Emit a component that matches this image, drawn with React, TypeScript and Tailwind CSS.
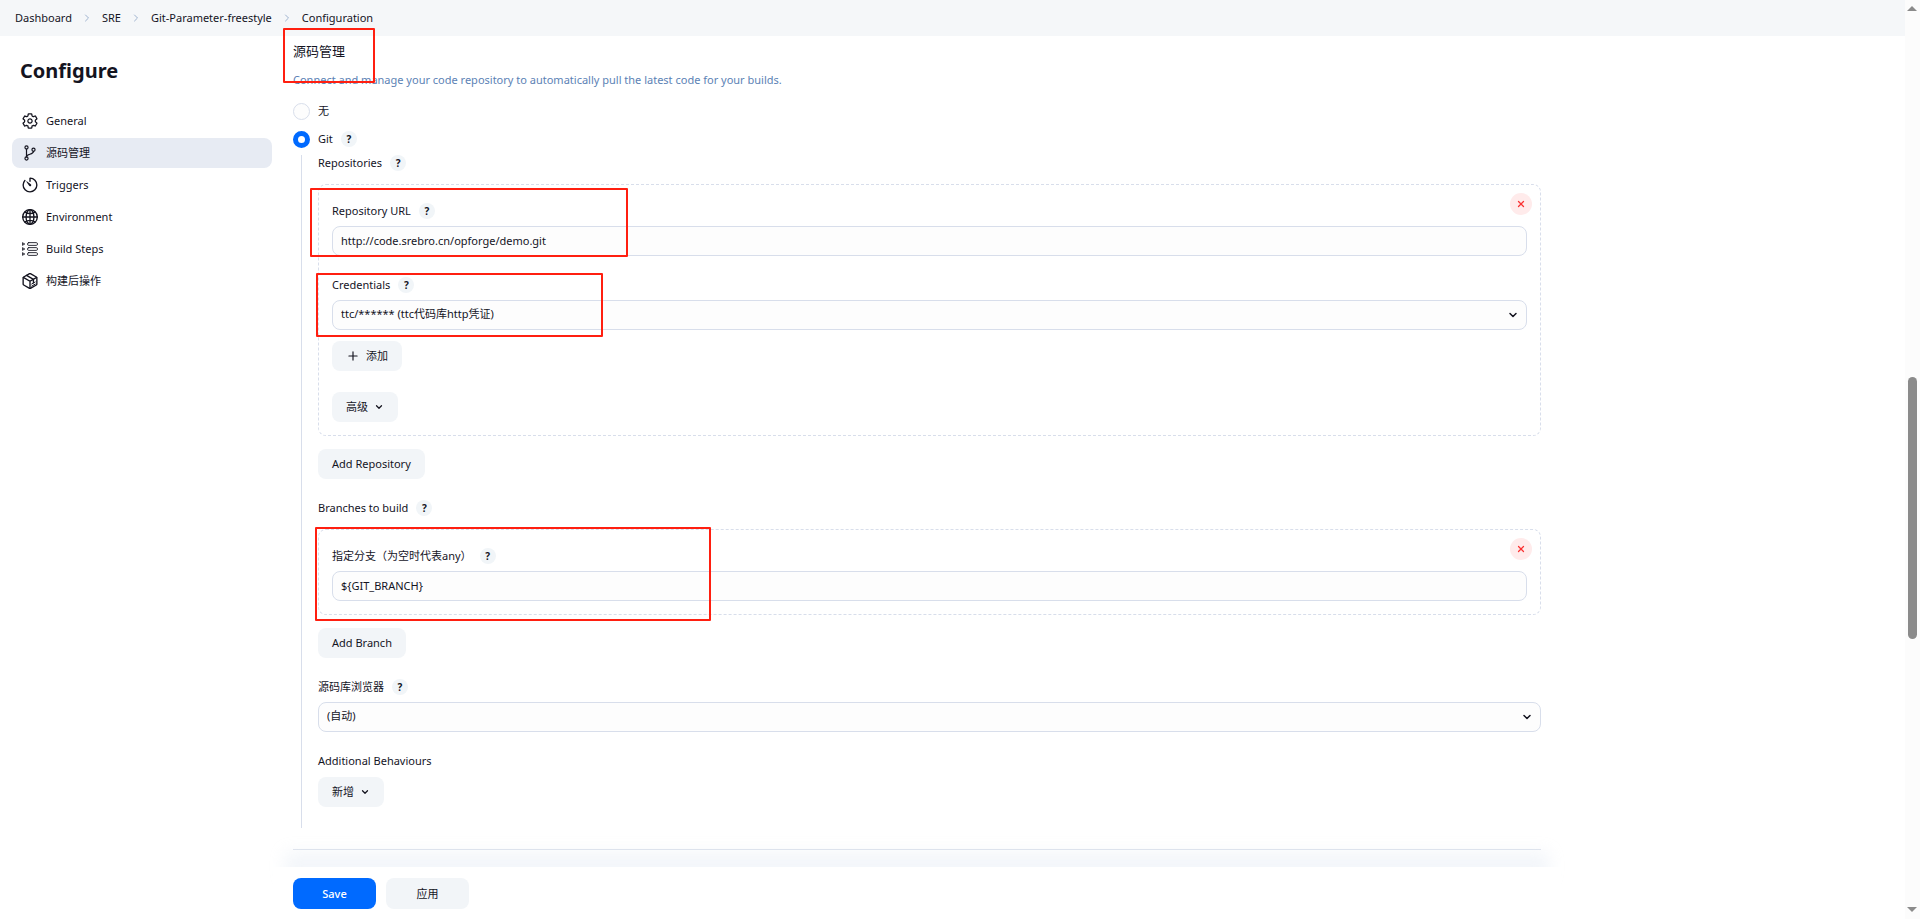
import React, { useId, useState } from 'react';
import { ChevronDown, ChevronRight, Plus, X } from 'lucide-react';

const iconProps = {
  width: 16,
  height: 16,
  viewBox: '0 0 512 512',
  fill: 'none',
  stroke: 'currentColor',
  strokeWidth: 38,
  strokeLinecap: 'round' as const,
  strokeLinejoin: 'round' as const,
};

const GearIcon = () => (
  <svg {...iconProps} viewBox="16 16 480 480">
    <path d="M262.29 192.31a64 64 0 1057.4 57.4 64.13 64.13 0 00-57.4-57.4zM416.39 256a154.34 154.34 0 01-1.53 20.79l45.21 35.46a10.81 10.81 0 012.45 13.75l-42.77 74a10.81 10.81 0 01-13.14 4.59l-44.9-18.08a16.11 16.11 0 00-15.17 1.75A164.48 164.48 0 01325 400.8a15.94 15.94 0 00-8.82 12.14l-6.73 47.89a11.08 11.08 0 01-10.68 9.17h-85.54a11.11 11.11 0 01-10.69-8.87l-6.72-47.82a16.07 16.07 0 00-9-12.22 155.3 155.3 0 01-21.46-12.57 16 16 0 00-15.11-1.71l-44.89 18.07a10.81 10.81 0 01-13.14-4.58l-42.77-74a10.8 10.8 0 012.45-13.75l38.21-30a16.05 16.05 0 006-14.08c-.36-4.17-.58-8.33-.58-12.5s.21-8.27.58-12.35a16 16 0 00-6.07-13.94l-38.19-30A10.81 10.81 0 0149.48 186l42.77-74a10.81 10.81 0 0113.14-4.59l44.9 18.08a16.11 16.11 0 0015.17-1.75A164.48 164.48 0 01187 111.2a15.94 15.94 0 008.82-12.14l6.73-47.89A11.08 11.08 0 01213.23 42h85.54a11.11 11.11 0 0110.69 8.87l6.72 47.82a16.07 16.07 0 009 12.22 155.3 155.3 0 0121.46 12.57 16 16 0 0015.11 1.71l44.89-18.07a10.81 10.81 0 0113.14 4.58l42.77 74a10.8 10.8 0 01-2.45 13.75l-38.21 30a16.05 16.05 0 00-6.05 14.08c.33 4.14.55 8.3.55 12.47z" />
  </svg>
);

const BranchIcon = () => (
  <svg {...iconProps}>
    <circle cx="144" cy="80" r="50" />
    <circle cx="144" cy="432" r="50" />
    <circle cx="368" cy="152" r="50" />
    <path d="M144 382V130M368 202c0 128-224 60-224 180" />
  </svg>
);

const TimerIcon = () => (
  <svg {...iconProps} viewBox="32 32 448 448">
    <path d="M112.91 128A191.85 191.85 0 0064 254c-1.18 106.35 85.65 193.8 192 194 106.2.2 192-85.83 192-192 0-104.54-83.55-189.61-187.5-192a4.36 4.36 0 00-4.5 4.37V152" />
    <path d="M233.38 278.63l-79-113a8.13 8.13 0 0111.32-11.32l113 79a32.5 32.5 0 01-37.25 53.26 33.21 33.21 0 01-8.07-7.94z" fill="currentColor" strokeWidth="0" />
  </svg>
);

const GlobeIcon = () => (
  <svg {...iconProps} viewBox="28 28 456 456">
    <path d="M256 48C141.13 48 48 141.13 48 256s93.13 208 208 208 208-93.13 208-208S370.87 48 256 48z" />
    <path d="M256 48c-58.07 0-112.67 93.13-112.67 208S197.93 464 256 464s112.67-93.13 112.67-208S314.07 48 256 48z" />
    <path d="M117.33 117.33c38.24 27.15 86.38 43.34 138.67 43.34s100.43-16.19 138.67-43.34M394.67 394.67c-38.24-27.15-86.38-43.34-138.67-43.34s-100.43 16.19-138.67 43.34M256 48v416M464 256H48" />
  </svg>
);

const StepsIcon = () => (
  <svg {...iconProps} strokeWidth={28}>
    <rect x="176" y="52" width="320" height="88" rx="40" />
    <rect x="176" y="212" width="320" height="88" rx="40" />
    <rect x="176" y="372" width="320" height="88" rx="40" />
    <path d="M24 60l64 36-64 36zM24 220l64 36-64 36zM24 380l64 36-64 36z" />
  </svg>
);

const CubeIcon = () => (
  <svg {...iconProps} viewBox="32 32 448 448">
    <path d="M448 341.37V170.61A32 32 0 00432.11 143l-152-88.46a47.94 47.94 0 00-48.24 0L79.89 143A32 32 0 0064 170.61v170.76A32 32 0 0079.89 369l152 88.46a48 48 0 0048.24 0l152-88.46A32 32 0 00448 341.37z" />
    <path d="M69 153.99l187 110 187-110M256 463.99v-200M160 100l192 112v96" />
    <path d="M304 340l96-56M304 400l96-56" strokeWidth="28" />
  </svg>
);

const crumbs = ['Dashboard', 'SRE', 'Git-Parameter-freestyle', 'Configuration'];

const navItems = [
  { label: 'General', icon: GearIcon },
  { label: '源码管理', icon: BranchIcon },
  { label: 'Triggers', icon: TimerIcon },
  { label: 'Environment', icon: GlobeIcon },
  { label: 'Build Steps', icon: StepsIcon },
  { label: '构建后操作', icon: CubeIcon },
];

const fieldClass = 'block h-[30px] w-full rounded-lg border border-[#d8deeb] bg-[#fdfdfd] px-2 pb-[2px] text-[11px] outline-none';

const Help = ({ topic }: { topic: string }) => (
  <button
    type="button"
    aria-label={`Help for ${topic}`}
    className="flex size-4 items-center justify-center rounded-full bg-[#f1f5f8] text-[10px] font-bold"
  >
    ?
  </button>
);

const Label = ({ text, htmlFor, help = true }: { text: string; htmlFor?: string; help?: boolean }) => (
  <div className="flex h-4 items-center gap-2">
    {htmlFor ? <label htmlFor={htmlFor}>{text}</label> : <span>{text}</span>}
    {help && <Help topic={text} />}
  </div>
);

const TextField = ({ label, value }: { label: string; value: string }) => {
  const id = useId();
  return (
    <div className="space-y-[7px]">
      <Label text={label} htmlFor={id} />
      <input id={id} type="text" defaultValue={value} className={fieldClass} />
    </div>
  );
};

const SelectField = ({ label, value }: { label: string; value: string }) => {
  const id = useId();
  return (
    <div className="space-y-[7px]">
      <Label text={label} htmlFor={id} />
      <div className="relative">
        <select id={id} className={`${fieldClass} appearance-none`}>
          <option>{value}</option>
        </select>
        <ChevronDown size={12} strokeWidth={3} className="pointer-events-none absolute top-[9px] right-2" />
      </div>
    </div>
  );
};

const Btn = ({ children }: { children: React.ReactNode }) => (
  <button type="button" className="flex h-[30px] items-center rounded-lg bg-[#f2f5f8] px-[14px]">
    {children}
  </button>
);

const Chunk = ({ children }: { children: React.ReactNode }) => (
  <div className="relative rounded-lg border border-dashed border-[#d8deeb] px-[13px] pt-[18px] pb-[13px]">
    <button
      type="button"
      aria-label="Delete"
      className="absolute top-2 right-2 flex size-[22px] items-center justify-center rounded-full bg-[#ffebeb] text-[#fa3232]"
    >
      <X size={10} strokeWidth={3} />
    </button>
    {children}
  </div>
);

const Mark = ({ className }: { className: string }) => (
  <div className={`pointer-events-none absolute z-20 rounded-[1px] border-2 border-[#ff1f10] ${className}`} />
);

const App = () => {
  const [scm, setScm] = useState('git');
  const radioClass =
    'size-[17px] appearance-none rounded-full border border-[#d8deeb] bg-[#fdfdfd] checked:border-[5px] checked:border-[#006aff] checked:bg-white';

  return (
    <div className="relative flex min-h-screen flex-col bg-white pr-[15px] font-['Noto_Sans','Noto_Sans_CJK_SC',sans-serif] text-[11px] leading-4 text-[#14141f]">
      <header className="flex h-9 items-center bg-[#f5f7f9] px-[15px]">
        {crumbs.map((crumb, i) => (
          <React.Fragment key={crumb}>
            {i > 0 && <ChevronRight size={12} className="mx-[9px] text-[#9fb3cf]" />}
            <a href="#">{crumb}</a>
          </React.Fragment>
        ))}
      </header>

      <div className="flex flex-1">
        <aside className="w-[272px] shrink-0 pt-5 pl-3">
          <h1 className="px-2 text-[20px] leading-[30px] font-bold">Configure</h1>
          <nav className="mt-5 space-y-[2px]">
            {navItems.map(({ label, icon: Icon }, i) => (
              <a
                key={label}
                href="#"
                className={`flex h-[30px] items-center gap-2 rounded-lg px-[10px] ${i === 1 ? 'bg-[#e7ebf3]' : ''}`}
              >
                <Icon />
                {label}
              </a>
            ))}
          </nav>
        </aside>

        <div className="ml-[21px] flex max-w-[1248px] flex-1 flex-col">
          <main className="flex-1 pt-[5px]">
            <h2 className="text-[13px] leading-5">源码管理</h2>
            <p className="mt-[11px] text-[#5c82b5]">
              Connect and manage your code repository to automatically pull the latest code for your builds.
            </p>

            <label className="mt-[14px] flex h-[18px] items-center gap-2">
              <input type="radio" name="scm" className={radioClass} checked={scm === 'none'} onChange={() => setScm('none')} />
              无
            </label>
            <div className="mt-[10px] flex h-[18px] items-center gap-2">
              <label className="flex items-center gap-2">
                <input type="radio" name="scm" className={radioClass} checked={scm === 'git'} onChange={() => setScm('git')} />
                Git
              </label>
              <Help topic="Git" />
            </div>

            <div className="mt-[7px] ml-2 border-l border-[#d8deeb] pb-[21px] pl-4">
              <Label text="Repositories" />
              <div className="mt-[13px]">
                <Chunk>
                  <TextField label="Repository URL" value="http://code.srebro.cn/opforge/demo.git" />
                  <div className="mt-[21px]">
                    <SelectField label="Credentials" value="ttc/****** (ttc代码库http凭证)" />
                  </div>
                  <div className="mt-[11px] flex">
                    <Btn>
                      <Plus size={14} className="mr-1.5" />
                      添加
                    </Btn>
                  </div>
                  <div className="mt-[21px] flex">
                    <Btn>
                      高级
                      <ChevronDown size={10} strokeWidth={3} className="ml-1.5" />
                    </Btn>
                  </div>
                </Chunk>
              </div>
              <div className="mt-[13px] flex">
                <Btn>Add Repository</Btn>
              </div>

              <div className="mt-[21px] mb-[13px]">
                <Label text="Branches to build" />
              </div>
              <Chunk>
                <TextField label="指定分支（为空时代表any）" value="${GIT_BRANCH}" />
              </Chunk>
              <div className="mt-[13px] mb-[21px] flex">
                <Btn>Add Branch</Btn>
              </div>

              <SelectField label="源码库浏览器" value="(自动)" />

              <div className="mt-[21px] mb-2">
                <Label text="Additional Behaviours" help={false} />
              </div>
              <div className="flex">
                <Btn>
                  新增
                  <ChevronDown size={10} strokeWidth={3} className="ml-1.5" />
                </Btn>
              </div>
            </div>

            <hr className="mt-[21px] border-[#e0e5ee]" />
          </main>

          <footer className="sticky bottom-0 -mx-5 flex h-[52px] gap-[10px] bg-white px-5 pt-[11px] shadow-[0_-27px_16px_-12px_rgba(200,212,230,0.22)]">
            <button type="submit" className="h-[31px] w-[83px] rounded-lg bg-[#006aff] font-medium text-white">
              Save
            </button>
            <button type="button" className="h-[31px] w-[83px] rounded-lg bg-[#f2f5f8]">
              应用
            </button>
          </footer>
        </div>
      </div>

      <Mark className="top-7 left-[283px] h-[55px] w-[92px]" />
      <Mark className="top-[188px] left-[310px] h-[69px] w-[318px]" />
      <Mark className="top-[273px] left-[316px] h-16 w-[287px]" />
      <Mark className="top-[527px] left-[315px] h-[94px] w-[396px]" />

      <div className="fixed inset-y-0 right-0 w-[15px] bg-[#fcfcfc]">
        <svg width="10" height="5" viewBox="0 0 10 5" className="absolute top-[6px] right-[3px] fill-[#8b8b8b]">
          <path d="M0 5h10L5 0z" />
        </svg>
        <div className="absolute top-[41%] right-[3px] h-[262px] w-[9px] rounded-full bg-[#8b8b8b]" />
        <svg width="10" height="5" viewBox="0 0 10 5" className="absolute right-[3px] bottom-[7px] fill-[#8b8b8b]">
          <path d="M0 0h10L5 5z" />
        </svg>
      </div>
    </div>
  );
};

export default App;
